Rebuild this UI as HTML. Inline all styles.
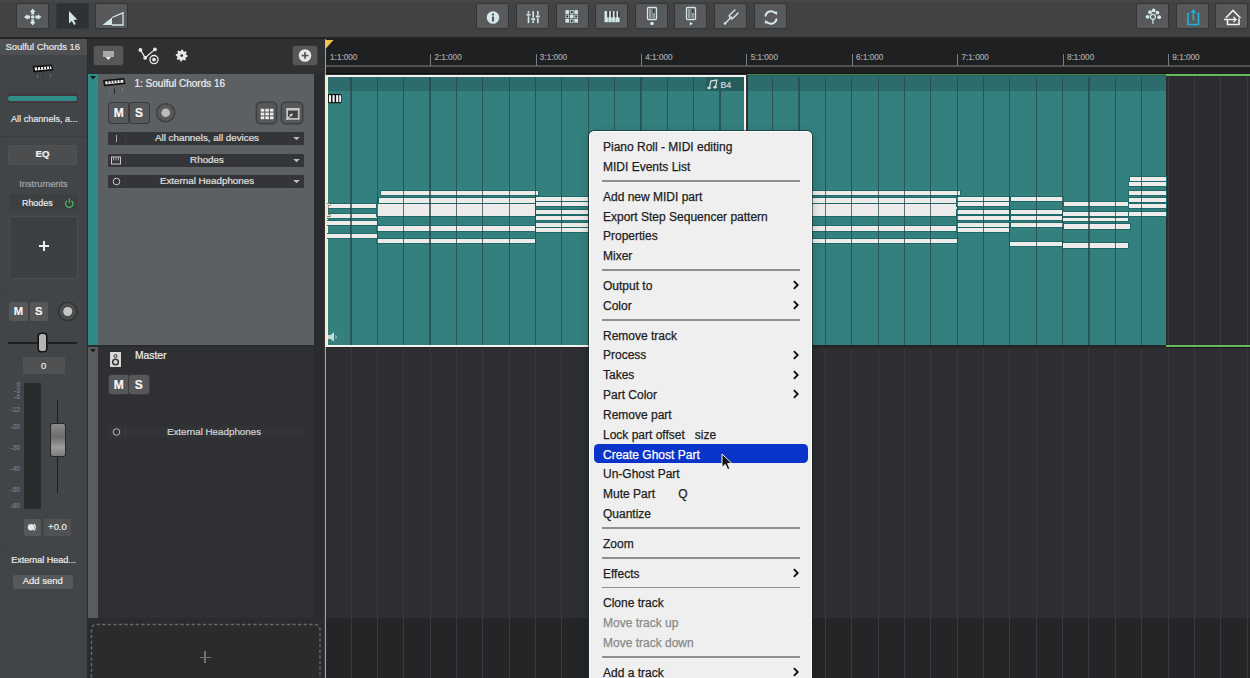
<!DOCTYPE html>
<html><head><meta charset="utf-8">
<style>
*{box-sizing:border-box;margin:0;padding:0}
html,body{width:1250px;height:678px;overflow:hidden;background:#3a3b3d;font-family:"Liberation Sans",sans-serif;position:relative}
.a{position:absolute}
.t{position:absolute;white-space:nowrap;line-height:1;-webkit-text-stroke-width:0.2px}
svg.a{overflow:visible}
</style></head><body>
<div class="a" style="left:0px;top:0px;width:1250px;height:37px;background:linear-gradient(180deg,#48494b 0px,#424345 2.5px,#404143 100%);"></div>
<div class="a" style="left:0px;top:37px;width:1250px;height:2px;background:#232426;"></div>
<div class="a" style="left:17px;top:4px;width:31px;height:24px;background:#58595b;border-radius:1.5px;box-shadow:0 0 0 1px #353638,0 1px 1px #2a2b2d"></div>
<div class="a" style="left:57px;top:4px;width:31px;height:24px;background:#2f3234;border-radius:1.5px;box-shadow:0 0 0 1px #353638,0 1px 1px #2a2b2d"></div>
<div class="a" style="left:96px;top:4px;width:31px;height:24px;background:#58595b;border-radius:1.5px;box-shadow:0 0 0 1px #353638,0 1px 1px #2a2b2d"></div>
<div class="a" style="left:477px;top:4px;width:31px;height:24px;background:#58595b;border-radius:1.5px;box-shadow:0 0 0 1px #353638,0 1px 1px #2a2b2d"></div>
<div class="a" style="left:517px;top:4px;width:31px;height:24px;background:#58595b;border-radius:1.5px;box-shadow:0 0 0 1px #353638,0 1px 1px #2a2b2d"></div>
<div class="a" style="left:557px;top:4px;width:31px;height:24px;background:#58595b;border-radius:1.5px;box-shadow:0 0 0 1px #353638,0 1px 1px #2a2b2d"></div>
<div class="a" style="left:596px;top:4px;width:31px;height:24px;background:#58595b;border-radius:1.5px;box-shadow:0 0 0 1px #353638,0 1px 1px #2a2b2d"></div>
<div class="a" style="left:636px;top:4px;width:31px;height:24px;background:#58595b;border-radius:1.5px;box-shadow:0 0 0 1px #353638,0 1px 1px #2a2b2d"></div>
<div class="a" style="left:675px;top:4px;width:31px;height:24px;background:#58595b;border-radius:1.5px;box-shadow:0 0 0 1px #353638,0 1px 1px #2a2b2d"></div>
<div class="a" style="left:715px;top:4px;width:31px;height:24px;background:#58595b;border-radius:1.5px;box-shadow:0 0 0 1px #353638,0 1px 1px #2a2b2d"></div>
<div class="a" style="left:755px;top:4px;width:31px;height:24px;background:#58595b;border-radius:1.5px;box-shadow:0 0 0 1px #353638,0 1px 1px #2a2b2d"></div>
<div class="a" style="left:1137px;top:4px;width:31px;height:24px;background:#58595b;border-radius:1.5px;box-shadow:0 0 0 1px #353638,0 1px 1px #2a2b2d"></div>
<div class="a" style="left:1177px;top:4px;width:31px;height:24px;background:#58595b;border-radius:1.5px;box-shadow:0 0 0 1px #353638,0 1px 1px #2a2b2d"></div>
<div class="a" style="left:1216px;top:4px;width:31px;height:24px;background:#58595b;border-radius:1.5px;box-shadow:0 0 0 1px #353638,0 1px 1px #2a2b2d"></div>
<svg class="a" style="left:17px;top:4px;" width="31" height="24" viewBox="0 0 31 24"><g fill="#d3e6ea"><path d="M15.7 4.5 L18.5 8 L12.9 8 Z"/><path d="M15.7 21.5 L18.5 18 L12.9 18 Z"/><path d="M7 13 L10.5 10.3 L10.5 15.7 Z"/><path d="M24.4 13 L20.9 10.3 L20.9 15.7 Z"/><rect x="14.2" y="7.5" width="3" height="3"/><rect x="14.2" y="15.5" width="3" height="3"/><rect x="10" y="11.5" width="3" height="3"/><rect x="18.4" y="11.5" width="3" height="3"/><circle cx="15.7" cy="13" r="1.8"/></g></svg>
<svg class="a" style="left:57px;top:4px;" width="31" height="24" viewBox="0 0 31 24"><path d="M12 7 L12 19.5 L14.8 17 L17 21 L18.8 20 L16.7 16 L20.3 15.6 Z" fill="#d3e6ea"/></svg>
<svg class="a" style="left:96px;top:4px;" width="31" height="24" viewBox="0 0 31 24"><path d="M6.5 21 L16 13.5 L16 21 Z" fill="#d3e6ea"/><path d="M16 13.5 L27 8.8 L27 21 L16 21" fill="none" stroke="#d3e6ea" stroke-width="1.3"/></svg>
<svg class="a" style="left:477px;top:4px;" width="31" height="24" viewBox="0 0 31 24"><circle cx="16" cy="13.5" r="6.3" fill="#d3e6ea"/><rect x="15" y="9.5" width="2" height="2" fill="#555"/><rect x="15" y="12.5" width="2" height="5" fill="#555"/></svg>
<svg class="a" style="left:517px;top:4px;" width="31" height="24" viewBox="0 0 31 24"><rect x="10.7" y="7.1" width="1.6" height="12" fill="#d3e6ea"/><rect x="9.2" y="9.1" width="4.6" height="3.2" fill="#58595b"/><rect x="9.6" y="9.7" width="3.8" height="2" fill="#d3e6ea"/><rect x="15.399999999999999" y="7.1" width="1.6" height="12" fill="#d3e6ea"/><rect x="13.899999999999999" y="13.700000000000001" width="4.6" height="3.2" fill="#58595b"/><rect x="14.299999999999999" y="14.3" width="3.8" height="2" fill="#d3e6ea"/><rect x="20.0" y="7.1" width="1.6" height="12" fill="#d3e6ea"/><rect x="18.5" y="10.8" width="4.6" height="3.2" fill="#58595b"/><rect x="18.900000000000002" y="11.4" width="3.8" height="2" fill="#d3e6ea"/></svg>
<svg class="a" style="left:557px;top:4px;" width="31" height="24" viewBox="0 0 31 24"><rect x="8.4" y="6.2" width="3.6" height="3.6" fill="#d3e6ea"/><rect x="8.75" y="10.950000000000001" width="2.9" height="2.9" fill="none" stroke="#d3e6ea" stroke-width="0.7"/><circle cx="10.200000000000001" cy="12.400000000000002" r="0.7" fill="#222"/><rect x="8.4" y="15.0" width="3.6" height="3.6" fill="#d3e6ea"/><rect x="13.25" y="6.55" width="2.9" height="2.9" fill="none" stroke="#d3e6ea" stroke-width="0.7"/><circle cx="14.700000000000001" cy="8.0" r="0.7" fill="#222"/><rect x="12.9" y="10.600000000000001" width="3.6" height="3.6" fill="#d3e6ea"/><rect x="13.25" y="15.35" width="2.9" height="2.9" fill="none" stroke="#d3e6ea" stroke-width="0.7"/><circle cx="14.700000000000001" cy="16.8" r="0.7" fill="#222"/><rect x="17.4" y="6.2" width="3.6" height="3.6" fill="#d3e6ea"/><rect x="17.75" y="10.950000000000001" width="2.9" height="2.9" fill="none" stroke="#d3e6ea" stroke-width="0.7"/><circle cx="19.2" cy="12.400000000000002" r="0.7" fill="#222"/><rect x="17.4" y="15.0" width="3.6" height="3.6" fill="#d3e6ea"/></svg>
<svg class="a" style="left:596px;top:4px;" width="31" height="24" viewBox="0 0 31 24"><rect x="8.5" y="7.1" width="15" height="11.1" fill="#d3e6ea"/><rect x="11.899999999999999" y="7.1" width="0.6" height="11.1" fill="#7f8c8e"/><rect x="15.6" y="7.1" width="0.6" height="11.1" fill="#7f8c8e"/><rect x="19.3" y="7.1" width="0.6" height="11.1" fill="#7f8c8e"/><rect x="11.2" y="7.1" width="1.9" height="6.2" fill="#3a3b3c"/><rect x="14.9" y="7.1" width="1.9" height="6.2" fill="#3a3b3c"/><rect x="18.6" y="7.1" width="1.9" height="6.2" fill="#3a3b3c"/><rect x="22.0" y="7.1" width="1.9" height="6.2" fill="#3a3b3c"/></svg>
<svg class="a" style="left:636px;top:4px;" width="31" height="24" viewBox="0 0 31 24"><rect x="11.5" y="3.5" width="9" height="12" rx="1" fill="none" stroke="#d3e6ea" stroke-width="1.3"/><rect x="13" y="5" width="2.5" height="9" fill="#8fa0a3"/><rect x="16.5" y="5" width="2.5" height="9" fill="#8fa0a3"/><rect x="17" y="5" width="1.6" height="4" fill="#333"/><circle cx="16" cy="19.5" r="1.8" fill="#d3e6ea"/></svg>
<svg class="a" style="left:675px;top:4px;" width="31" height="24" viewBox="0 0 31 24"><rect x="11.5" y="3.5" width="9" height="12" rx="1" fill="none" stroke="#d3e6ea" stroke-width="1.3"/><rect x="13" y="5" width="2.5" height="9" fill="#8fa0a3"/><rect x="16.5" y="5" width="2.5" height="9" fill="#8fa0a3"/><rect x="17" y="5" width="1.6" height="4" fill="#333"/><path d="M14.8 17.8 L18 19.7 L14.8 21.6 Z" fill="#d3e6ea"/></svg>
<svg class="a" style="left:715px;top:4px;" width="31" height="24" viewBox="0 0 31 24"><path d="M10 19.5 L16.5 13" stroke="#d3e6ea" stroke-width="1.5" stroke-linecap="round" fill="none"/><path d="M14 12 L17 15 M14 12 Q17.5 8 20 6 M17 15 Q21 11.5 23 9" stroke="#d3e6ea" stroke-width="1.4" fill="none" stroke-linecap="round"/><circle cx="10" cy="19.5" r="1.3" fill="#d3e6ea"/></svg>
<svg class="a" style="left:755px;top:4px;" width="31" height="24" viewBox="0 0 31 24"><path d="M10.5 12.5 A5.6 5.6 0 0 1 20.5 9.5" stroke="#d3e6ea" stroke-width="2" fill="none"/><path d="M21.5 14.5 A5.6 5.6 0 0 1 11.5 17.5" stroke="#d3e6ea" stroke-width="2" fill="none"/><path d="M19 7.5 L22.5 7.8 L21.5 11.3 Z" fill="#d3e6ea"/><path d="M13 19.5 L9.5 19.2 L10.5 15.7 Z" fill="#d3e6ea"/></svg>
<svg class="a" style="left:1137px;top:4px;" width="31" height="24" viewBox="0 0 31 24"><g fill="#d3e6ea"><circle cx="10.6" cy="12.8" r="1.9"/><circle cx="13" cy="8.2" r="1.9"/><circle cx="16.6" cy="6.4" r="1.9"/><circle cx="20.4" cy="8.6" r="1.9"/><circle cx="22.2" cy="13.2" r="1.9"/></g><circle cx="15.9" cy="12.8" r="2.5" fill="none" stroke="#d3e6ea" stroke-width="1.2"/><rect x="15.3" y="15.2" width="1.2" height="4.6" fill="#d3e6ea"/></svg>
<svg class="a" style="left:1177px;top:4px;" width="31" height="24" viewBox="0 0 31 24"><path d="M12.2 9.5 L11 9.5 L11 20.5 L21.5 20.5 L21.5 9.5 L20.3 9.5" stroke="#1fb3d9" stroke-width="1.6" fill="none"/><rect x="15.6" y="7.5" width="1.5" height="9" fill="#1fb3d9"/><path d="M13.4 8.8 L16.35 5 L19.3 8.8 Z" fill="#1fb3d9"/></svg>
<svg class="a" style="left:1216px;top:4px;" width="31" height="24" viewBox="0 0 31 24"><path d="M9.8 14 L17 6.5 L24.5 14 M11.5 16 L11.5 20.5 L23 20.5 L23 14.5" stroke="#f0f0f0" stroke-width="1.6" fill="none"/><path d="M8 15.5 L19 15.5" stroke="#f0f0f0" stroke-width="1.4"/><path d="M17.5 13 L20 15.5 L17.5 18" stroke="#f0f0f0" stroke-width="1.4" fill="none"/></svg>
<div class="a" style="left:0px;top:39px;width:87px;height:639px;background:#424548;"></div>
<div class="a" style="left:5px;top:55px;width:1px;height:623px;background:#3d4043;"></div>
<div class="a" style="left:81.5px;top:55px;width:1px;height:623px;background:#3d4043;"></div>
<div class="a" style="left:87px;top:39px;width:1px;height:639px;background:#2b2c2e;"></div>
<div class="a" style="left:0px;top:39px;width:87px;height:16px;background:#4e5052;"></div>
<div class="t" style="left:5.5px;top:42px;font-size:9.4px;color:#e8e8e8;">Soulful Chords 16</div>
<svg class="a" style="left:30px;top:62px;" width="26" height="22" viewBox="0 0 26 22"><path d="M2.5 4 L22 2.5 L23.5 8.5 L3.5 10.5 Z" fill="#111"/><path d="M4.5 5.5 L21 4.2 L21.7 7 L5 8.5 Z" fill="#eee"/><g fill="#111"><rect x="7" y="5" width="1" height="2.6"/><rect x="10" y="4.8" width="1" height="2.6"/><rect x="13" y="4.6" width="1" height="2.6"/><rect x="16" y="4.4" width="1" height="2.6"/><rect x="19" y="4.2" width="1" height="2.6"/></g><rect x="7" y="13" width="0.8" height="3" fill="#777"/><rect x="13" y="12.5" width="1" height="5" fill="#333"/><rect x="20" y="12" width="0.8" height="3" fill="#777"/></svg>
<div class="a" style="left:8px;top:93px;width:69.5px;height:10px;background:#41393c;border-radius:1px"></div>
<div class="a" style="left:8.2px;top:95.5px;width:69px;height:5.8px;background:#2f8d89;border-radius:2px"></div>
<div class="t" style="left:11px;top:114.5px;font-size:9.1px;color:#e6e6e6;">All channels, a...</div>
<div class="a" style="left:0px;top:135.5px;width:87px;height:1px;background:#3b3e41;"></div>
<div class="a" style="left:8px;top:145px;width:69px;height:20px;background:#4b4d4f;border-radius:2px;box-shadow:inset 0 0 0 1px #505254"></div>
<div class="t" style="left:8px;top:148.6px;font-size:9.6px;color:#f2f2f2;width:69px;text-align:center;font-weight:bold">EQ</div>
<div class="t" style="left:0px;top:180px;font-size:9.3px;color:#a4a6a8;width:87px;text-align:center">Instruments</div>
<div class="a" style="left:9px;top:194px;width:69px;height:17px;background:#3d3f41;border-radius:2px"></div>
<div class="t" style="left:22px;top:199px;font-size:8.9px;color:#ececec;">Rhodes</div>
<svg class="a" style="left:62px;top:196px;" width="14" height="14" viewBox="0 0 14 14"><path d="M5.3 4.6 A3.7 3.7 0 1 0 9.3 4.6" stroke="#4cc95a" stroke-width="1.1" fill="none"/><rect x="6.75" y="2.3" width="1.1" height="4.6" fill="#4cc95a"/></svg>
<div class="a" style="left:9px;top:215.5px;width:69px;height:63px;background:#3d4043;border-radius:2px;box-shadow:inset 0 0 0 1px #4a4d50"></div>
<div class="a" style="left:38.5px;top:245px;width:10px;height:2px;background:#eeeeee;"></div>
<div class="a" style="left:42.5px;top:241px;width:2px;height:10px;background:#eeeeee;"></div>
<div class="a" style="left:0px;top:292px;width:87px;height:1px;background:#3e4042;"></div>
<div class="a" style="left:9px;top:302px;width:19px;height:19px;background:#555759;border-radius:2px"></div>
<div class="a" style="left:29.5px;top:302px;width:18.5px;height:19px;background:#555759;border-radius:2px"></div>
<div class="t" style="left:9px;top:306.2px;font-size:11.2px;color:#f4f4f4;width:19px;text-align:center;font-weight:bold">M</div>
<div class="t" style="left:29.5px;top:306.2px;font-size:11.2px;color:#f4f4f4;width:18.5px;text-align:center;font-weight:bold">S</div>
<svg class="a" style="left:56px;top:300px;" width="24" height="24" viewBox="0 0 24 24"><circle cx="11.7" cy="11.5" r="9.2" fill="#4a4c4e" stroke="#323335" stroke-width="1.6"/><circle cx="11.7" cy="11.5" r="4.5" fill="#c6c6c6"/></svg>
<div class="a" style="left:8px;top:342px;width:69px;height:1.6px;background:#1f2022;"></div>
<div class="a" style="left:38.9px;top:333.7px;width:7.6px;height:17.7px;background:#b4b4b4;border-radius:2.5px;box-shadow:0 0 0 1.6px #151515"></div>
<div class="a" style="left:22.5px;top:357px;width:42.5px;height:17px;background:#4f5153;border-radius:1px"></div>
<div class="t" style="left:22.5px;top:361px;font-size:9.5px;color:#eeeeee;width:42.5px;text-align:center">0</div>
<div class="a" style="left:24px;top:383px;width:17px;height:126px;background:#2a2b2d;"></div>
<div class="t" style="left:0px;top:382px;font-size:6.5px;color:#7b7d80;width:20px;text-align:right">0</div>
<div class="t" style="left:0px;top:388px;font-size:6.5px;color:#7b7d80;width:20px;text-align:right">-3</div>
<div class="t" style="left:0px;top:394.3px;font-size:6.5px;color:#7b7d80;width:20px;text-align:right">-6</div>
<div class="t" style="left:0px;top:407px;font-size:6.5px;color:#7b7d80;width:20px;text-align:right">-12</div>
<div class="t" style="left:0px;top:424.4px;font-size:6.5px;color:#7b7d80;width:20px;text-align:right">-20</div>
<div class="t" style="left:0px;top:444.9px;font-size:6.5px;color:#7b7d80;width:20px;text-align:right">-30</div>
<div class="t" style="left:0px;top:466px;font-size:6.5px;color:#7b7d80;width:20px;text-align:right">-40</div>
<div class="t" style="left:0px;top:487.3px;font-size:6.5px;color:#7b7d80;width:20px;text-align:right">-50</div>
<div class="t" style="left:0px;top:502.5px;font-size:6.5px;color:#7b7d80;width:20px;text-align:right">-60</div>
<div class="a" style="left:56.6px;top:400px;width:1.8px;height:93px;background:#1c1d1f;"></div>
<div class="a" style="left:50.8px;top:423.5px;width:14.5px;height:32px;background:linear-gradient(180deg,#8c8c8c 0%,#6c6c6c 40%,#9c9c9c 72%,#7c7c7c 100%);border-radius:2px;box-shadow:0 0 0 1px #262626"></div>
<div class="a" style="left:24px;top:519px;width:16.5px;height:16.5px;background:#555759;border-radius:2px"></div>
<svg class="a" style="left:24px;top:519px;" width="17" height="17" viewBox="0 0 17 17"><circle cx="7" cy="8.3" r="3.2" fill="#e6e6e6"/><path d="M10 5 Q12.5 8.3 10 11.6" stroke="#e6e6e6" stroke-width="1.3" fill="none"/></svg>
<div class="a" style="left:44px;top:519px;width:27px;height:16.5px;background:#4f5153;border-radius:1px"></div>
<div class="t" style="left:44px;top:522px;font-size:9.5px;color:#eeeeee;width:27px;text-align:center">+0.0</div>
<div class="a" style="left:0px;top:544.5px;width:87px;height:1px;background:#3e4042;"></div>
<div class="t" style="left:0px;top:556.3px;font-size:9.0px;color:#ececec;width:87px;text-align:center">External Head...</div>
<div class="a" style="left:12.5px;top:575px;width:60.5px;height:14px;background:#56585a;border-radius:2px"></div>
<div class="t" style="left:12.5px;top:576.4px;font-size:9.5px;color:#ececec;width:60.5px;text-align:center">Add send</div>
<div class="a" style="left:88px;top:39px;width:237px;height:35px;background:#2f3032;"></div>
<div class="a" style="left:88px;top:74px;width:237px;height:604px;background:#2a2b2d;"></div>
<div class="a" style="left:94px;top:45.7px;width:28.5px;height:19px;background:#555759;border-radius:2px;box-shadow:0 0 0 1px #39393b"></div>
<div class="a" style="left:102.5px;top:51px;width:11.3px;height:6px;background:#a8a9aa;"></div>
<svg class="a" style="left:94px;top:45px;" width="29" height="20" viewBox="0 0 29 20"><path d="M11.5 12 L17 12 L14.25 15 Z" fill="#f0f0f0"/></svg>
<svg class="a" style="left:136px;top:44px;" width="24" height="22" viewBox="0 0 24 22"><path d="M4.4 5.9 L9.2 13.8 L18.9 5.4" stroke="#e8e8e8" stroke-width="1.2" fill="none"/><circle cx="4.4" cy="5.9" r="1.9" fill="#e8e8e8"/><circle cx="9.2" cy="13.8" r="1.9" fill="#e8e8e8"/><circle cx="18.9" cy="5.4" r="1.9" fill="#e8e8e8"/><circle cx="18" cy="15.6" r="4.1" fill="#2f3032" stroke="#e8e8e8" stroke-width="1.3"/><circle cx="18" cy="15.6" r="1.9" fill="#e8e8e8"/></svg>
<svg class="a" style="left:174px;top:48px;" width="16" height="16" viewBox="0 0 16 16"><polygon points="13.70,7.60 13.58,8.77 11.95,9.36 11.52,10.16 11.94,11.84 11.03,12.59 9.46,11.85 8.60,12.11 7.70,13.60 6.53,13.48 5.94,11.85 5.14,11.42 3.46,11.84 2.71,10.93 3.45,9.36 3.19,8.50 1.70,7.60 1.82,6.43 3.45,5.84 3.88,5.04 3.46,3.36 4.37,2.61 5.94,3.35 6.80,3.09 7.70,1.60 8.87,1.72 9.46,3.35 10.26,3.78 11.94,3.36 12.69,4.27 11.95,5.84 12.21,6.70" fill="#e6e8ea"/><circle cx="7.7" cy="7.6" r="1.4" fill="#2f3032"/></svg>
<div class="a" style="left:293px;top:46px;width:24px;height:19px;background:#555759;border-radius:2px;box-shadow:0 0 0 1px #39393b"></div>
<svg class="a" style="left:293px;top:46px;" width="24" height="19" viewBox="0 0 24 19"><circle cx="12" cy="9.5" r="6.3" fill="#e8e8e8"/><rect x="8.6" y="8.7" width="6.8" height="1.7" fill="#555759"/><rect x="11.15" y="6.1" width="1.7" height="6.8" fill="#555759"/></svg>
<div class="a" style="left:88px;top:74px;width:10px;height:271px;background:#2e8b88;"></div>
<svg class="a" style="left:89px;top:75px;" width="8" height="6" viewBox="0 0 8 6"><path d="M1 1 L7 1 L4 4.5 Z" fill="#1c1d1f"/></svg>
<div class="a" style="left:98px;top:74px;width:215.5px;height:271px;background:#5d6063;"></div>
<svg class="a" style="left:101px;top:76px;" width="28" height="22" viewBox="0 0 28 22"><path d="M2 4 L23 2 L24.5 8 L3 10.5 Z" fill="#111"/><path d="M4 5.5 L22 3.8 L22.7 6.6 L4.5 8.5 Z" fill="#eee"/><g fill="#111"><rect x="6.5" y="5" width="1" height="2.6"/><rect x="9.5" y="4.7" width="1" height="2.6"/><rect x="12.5" y="4.4" width="1" height="2.6"/><rect x="15.5" y="4.1" width="1" height="2.6"/><rect x="18.5" y="3.8" width="1" height="2.6"/></g><rect x="8" y="13" width="0.8" height="3.5" fill="#777"/><rect x="13" y="12.5" width="1" height="5" fill="#222"/><rect x="21" y="12" width="0.8" height="3" fill="#888"/></svg>
<div class="t" style="left:134.5px;top:78.6px;font-size:10px;color:#f0f0f0;">1: Soulful Chords 16</div>
<div class="a" style="left:108.5px;top:103px;width:20.5px;height:19.5px;background:#555759;border-radius:3px;box-shadow:0 0 0 1px #3a3b3d"></div>
<div class="a" style="left:129px;top:103px;width:20px;height:19.5px;background:#555759;border-radius:3px;box-shadow:0 0 0 1px #3a3b3d"></div>
<div class="a" style="left:128.5px;top:103px;width:1px;height:19.5px;background:#3a3b3d;"></div>
<div class="t" style="left:108.5px;top:106.8px;font-size:12px;color:#f5f5f5;width:20.5px;text-align:center;font-weight:bold">M</div>
<div class="t" style="left:129px;top:106.8px;font-size:12px;color:#f5f5f5;width:20px;text-align:center;font-weight:bold">S</div>
<svg class="a" style="left:154px;top:101px;" width="24" height="24" viewBox="0 0 24 24"><circle cx="11.7" cy="11.7" r="9" fill="#58595b" stroke="#3f4042" stroke-width="1.6"/><circle cx="11.7" cy="11.7" r="4.3" fill="#bdbdbd"/></svg>
<div class="a" style="left:256.5px;top:102.5px;width:19.5px;height:20px;background:#555759;border-radius:3.5px;box-shadow:0 0 0 1.4px #3d3e40"></div>
<svg class="a" style="left:256.5px;top:102.5px;" width="20" height="20" viewBox="0 0 20 20"><rect x="3.7" y="5.8" width="3.6" height="2.8" fill="#ececec"/><rect x="3.7" y="9.6" width="3.6" height="2.8" fill="#ececec"/><rect x="3.7" y="13.399999999999999" width="3.6" height="2.8" fill="#ececec"/><rect x="8.3" y="5.8" width="3.6" height="2.8" fill="#ececec"/><rect x="8.3" y="9.6" width="3.6" height="2.8" fill="#ececec"/><rect x="8.3" y="13.399999999999999" width="3.6" height="2.8" fill="#ececec"/><rect x="12.899999999999999" y="5.8" width="3.6" height="2.8" fill="#ececec"/><rect x="12.899999999999999" y="9.6" width="3.6" height="2.8" fill="#ececec"/><rect x="12.899999999999999" y="13.399999999999999" width="3.6" height="2.8" fill="#ececec"/></svg>
<div class="a" style="left:282.2px;top:102.5px;width:20px;height:20px;background:#555759;border-radius:3.5px;box-shadow:0 0 0 1.4px #3d3e40"></div>
<svg class="a" style="left:282px;top:102.5px;" width="21" height="20" viewBox="0 0 21 20"><rect x="5.2" y="5.9" width="11.5" height="10" fill="#3f4042" stroke="#c6c6c6" stroke-width="1.7"/><rect x="4.4" y="5.1" width="13.1" height="2.4" fill="#c6c6c6"/><path d="M4.3 16.8 L9.6 11.6" stroke="#d8d8d8" stroke-width="1.1"/><path d="M10.8 10.4 L7.6 11.2 L10 13.6 Z" fill="#d8d8d8"/></svg>
<div class="a" style="left:108px;top:132px;width:195.5px;height:13px;background:#343538;border-radius:1px"></div>
<div class="a" style="left:124.5px;top:133px;width:1px;height:11px;background:#3c3d40;"></div>
<div class="a" style="left:289px;top:133px;width:1px;height:11px;background:#3c3d40;"></div>
<div class="t" style="left:125px;top:132.9px;font-size:9.8px;color:#e0e0e0;width:164px;text-align:center">All channels, all devices</div>
<svg class="a" style="left:290px;top:132px;" width="13" height="13" viewBox="0 0 13 13"><path d="M3.2 5 L9.8 5 L6.5 8.3 Z" fill="#bdbdbd"/></svg>
<div class="a" style="left:116px;top:135px;width:1px;height:7px;background:#aaaaaa;"></div>
<div class="a" style="left:108px;top:153.6px;width:195.5px;height:13px;background:#343538;border-radius:1px"></div>
<div class="a" style="left:124.5px;top:154.6px;width:1px;height:11px;background:#3c3d40;"></div>
<div class="a" style="left:289px;top:154.6px;width:1px;height:11px;background:#3c3d40;"></div>
<div class="t" style="left:125px;top:154.5px;font-size:9.8px;color:#e0e0e0;width:164px;text-align:center">Rhodes</div>
<svg class="a" style="left:290px;top:153.6px;" width="13" height="13" viewBox="0 0 13 13"><path d="M3.2 5 L9.8 5 L6.5 8.3 Z" fill="#bdbdbd"/></svg>
<svg class="a" style="left:108px;top:153.6px;" width="17" height="13" viewBox="0 0 17 13"><rect x="3.5" y="3" width="9" height="7" fill="none" stroke="#c8c8c8" stroke-width="1"/><g fill="#c8c8c8"><rect x="5.3" y="3" width="0.8" height="3.5"/><rect x="7.7" y="3" width="0.8" height="3.5"/><rect x="10.1" y="3" width="0.8" height="3.5"/></g></svg>
<div class="a" style="left:108px;top:175.3px;width:195.5px;height:13px;background:#343538;border-radius:1px"></div>
<div class="a" style="left:124.5px;top:176.3px;width:1px;height:11px;background:#3c3d40;"></div>
<div class="a" style="left:289px;top:176.3px;width:1px;height:11px;background:#3c3d40;"></div>
<div class="t" style="left:125px;top:176.20000000000002px;font-size:9.8px;color:#e0e0e0;width:164px;text-align:center">External Headphones</div>
<svg class="a" style="left:290px;top:175.3px;" width="13" height="13" viewBox="0 0 13 13"><path d="M3.2 5 L9.8 5 L6.5 8.3 Z" fill="#bdbdbd"/></svg>
<svg class="a" style="left:108px;top:175.3px;" width="17" height="13" viewBox="0 0 17 13"><circle cx="8.5" cy="6.5" r="3.3" fill="none" stroke="#c8c8c8" stroke-width="1"/></svg>
<div class="a" style="left:88px;top:345px;width:225.5px;height:1.5px;background:#2a2b2d;"></div>
<div class="a" style="left:88px;top:346.5px;width:10px;height:271px;background:#5b5c5d;"></div>
<svg class="a" style="left:89px;top:348px;" width="8" height="6" viewBox="0 0 8 6"><path d="M1 1 L7 1 L4 4.5 Z" fill="#1c1d1f"/></svg>
<div class="a" style="left:98px;top:346.5px;width:215.5px;height:271px;background:#2f3033;"></div>
<svg class="a" style="left:108px;top:350px;" width="16" height="20" viewBox="0 0 16 20"><rect x="2" y="2" width="11" height="15" fill="#d8d8d8" rx="0.5"/><circle cx="7.5" cy="6" r="1.5" fill="none" stroke="#333" stroke-width="1"/><circle cx="7.5" cy="12" r="2.8" fill="none" stroke="#333" stroke-width="1.5"/></svg>
<div class="t" style="left:135px;top:351.2px;font-size:10.3px;color:#f0f0f0;">Master</div>
<div class="a" style="left:109px;top:375px;width:19.5px;height:19px;background:#555759;border-radius:3px;box-shadow:0 0 0 1px #3a3b3d"></div>
<div class="a" style="left:129px;top:375px;width:19.5px;height:19px;background:#555759;border-radius:3px;box-shadow:0 0 0 1px #3a3b3d"></div>
<div class="t" style="left:109px;top:378.5px;font-size:12px;color:#f5f5f5;width:19.5px;text-align:center;font-weight:bold">M</div>
<div class="t" style="left:129px;top:378.5px;font-size:12px;color:#f5f5f5;width:19.5px;text-align:center;font-weight:bold">S</div>
<div class="a" style="left:108px;top:426px;width:195px;height:12px;background:#323336;border-radius:1px"></div>
<div class="a" style="left:124.5px;top:427px;width:1px;height:10px;background:#3a3b3e;"></div>
<div class="t" style="left:125px;top:426.6px;font-size:9.8px;color:#d5d6d7;width:178px;text-align:center">External Headphones</div>
<svg class="a" style="left:108px;top:426px;" width="17" height="12" viewBox="0 0 17 12"><circle cx="8.5" cy="6" r="3.3" fill="none" stroke="#b8b8b8" stroke-width="1"/></svg>
<div class="a" style="left:88px;top:617.5px;width:237px;height:61px;background:#2a2b2d;"></div>
<svg class="a" style="left:90px;top:623px;" width="232" height="60" viewBox="0 0 232 60"><rect x="1.5" y="1.5" width="228.5" height="70" rx="5" fill="none" stroke="#68696b" stroke-width="1.4" stroke-dasharray="3.2 2.4"/></svg>
<div class="a" style="left:199.5px;top:656.5px;width:11px;height:1.2px;background:#707173;"></div>
<div class="a" style="left:204.4px;top:651px;width:1.2px;height:11.5px;background:#707173;"></div>
<div class="a" style="left:325px;top:39px;width:925px;height:35px;background:#1f2022;"></div>
<div class="a" style="left:325px;top:64.9px;width:925px;height:1.7px;background:#505153;"></div>
<div class="t" style="left:330.06px;top:53.6px;font-size:8.2px;color:#a4a5a7;">1:1:000</div>
<div class="a" style="left:430.18px;top:54px;width:1px;height:11.5px;background:#7c7d7f;"></div>
<div class="t" style="left:434.38px;top:53.6px;font-size:8.2px;color:#a4a5a7;">2:1:000</div>
<div class="a" style="left:535.6px;top:54px;width:1px;height:11.5px;background:#7c7d7f;"></div>
<div class="t" style="left:539.8000000000001px;top:53.6px;font-size:8.2px;color:#a4a5a7;">3:1:000</div>
<div class="a" style="left:641.02px;top:54px;width:1px;height:11.5px;background:#7c7d7f;"></div>
<div class="t" style="left:645.22px;top:53.6px;font-size:8.2px;color:#a4a5a7;">4:1:000</div>
<div class="a" style="left:746.44px;top:54px;width:1px;height:11.5px;background:#7c7d7f;"></div>
<div class="t" style="left:750.6400000000001px;top:53.6px;font-size:8.2px;color:#a4a5a7;">5:1:000</div>
<div class="a" style="left:851.86px;top:54px;width:1px;height:11.5px;background:#7c7d7f;"></div>
<div class="t" style="left:856.0600000000001px;top:53.6px;font-size:8.2px;color:#a4a5a7;">6:1:000</div>
<div class="a" style="left:957.28px;top:54px;width:1px;height:11.5px;background:#7c7d7f;"></div>
<div class="t" style="left:961.48px;top:53.6px;font-size:8.2px;color:#a4a5a7;">7:1:000</div>
<div class="a" style="left:1062.7px;top:54px;width:1px;height:11.5px;background:#7c7d7f;"></div>
<div class="t" style="left:1066.9px;top:53.6px;font-size:8.2px;color:#a4a5a7;">8:1:000</div>
<div class="a" style="left:1168.12px;top:54px;width:1px;height:11.5px;background:#7c7d7f;"></div>
<div class="t" style="left:1172.32px;top:53.6px;font-size:8.2px;color:#a4a5a7;">9:1:000</div>
<div class="a" style="left:325px;top:74px;width:925px;height:272px;background:#2a2c2f;"></div>
<div class="a" style="left:325px;top:346px;width:925px;height:271.5px;background:#2c2e31;"></div>
<div class="a" style="left:325px;top:617.5px;width:925px;height:61px;background:#232527;"></div>
<div class="a" style="left:324.16px;top:74px;width:1px;height:604px;background:#37393c;"></div>
<div class="a" style="left:350.51px;top:74px;width:1px;height:604px;background:#37393c;"></div>
<div class="a" style="left:376.87px;top:74px;width:1px;height:604px;background:#37393c;"></div>
<div class="a" style="left:403.22px;top:74px;width:1px;height:604px;background:#37393c;"></div>
<div class="a" style="left:429.58px;top:74px;width:1px;height:604px;background:#37393c;"></div>
<div class="a" style="left:455.93px;top:74px;width:1px;height:604px;background:#37393c;"></div>
<div class="a" style="left:482.29px;top:74px;width:1px;height:604px;background:#37393c;"></div>
<div class="a" style="left:508.64px;top:74px;width:1px;height:604px;background:#37393c;"></div>
<div class="a" style="left:535.0px;top:74px;width:1px;height:604px;background:#37393c;"></div>
<div class="a" style="left:561.35px;top:74px;width:1px;height:604px;background:#37393c;"></div>
<div class="a" style="left:587.71px;top:74px;width:1px;height:604px;background:#37393c;"></div>
<div class="a" style="left:614.06px;top:74px;width:1px;height:604px;background:#37393c;"></div>
<div class="a" style="left:640.42px;top:74px;width:1px;height:604px;background:#37393c;"></div>
<div class="a" style="left:666.77px;top:74px;width:1px;height:604px;background:#37393c;"></div>
<div class="a" style="left:693.13px;top:74px;width:1px;height:604px;background:#37393c;"></div>
<div class="a" style="left:719.49px;top:74px;width:1px;height:604px;background:#37393c;"></div>
<div class="a" style="left:745.84px;top:74px;width:1px;height:604px;background:#37393c;"></div>
<div class="a" style="left:772.2px;top:74px;width:1px;height:604px;background:#37393c;"></div>
<div class="a" style="left:798.55px;top:74px;width:1px;height:604px;background:#37393c;"></div>
<div class="a" style="left:824.9px;top:74px;width:1px;height:604px;background:#37393c;"></div>
<div class="a" style="left:851.26px;top:74px;width:1px;height:604px;background:#37393c;"></div>
<div class="a" style="left:877.62px;top:74px;width:1px;height:604px;background:#37393c;"></div>
<div class="a" style="left:903.97px;top:74px;width:1px;height:604px;background:#37393c;"></div>
<div class="a" style="left:930.32px;top:74px;width:1px;height:604px;background:#37393c;"></div>
<div class="a" style="left:956.68px;top:74px;width:1px;height:604px;background:#37393c;"></div>
<div class="a" style="left:983.03px;top:74px;width:1px;height:604px;background:#37393c;"></div>
<div class="a" style="left:1009.39px;top:74px;width:1px;height:604px;background:#37393c;"></div>
<div class="a" style="left:1035.75px;top:74px;width:1px;height:604px;background:#37393c;"></div>
<div class="a" style="left:1062.1px;top:74px;width:1px;height:604px;background:#37393c;"></div>
<div class="a" style="left:1088.45px;top:74px;width:1px;height:604px;background:#37393c;"></div>
<div class="a" style="left:1114.81px;top:74px;width:1px;height:604px;background:#37393c;"></div>
<div class="a" style="left:1141.16px;top:74px;width:1px;height:604px;background:#37393c;"></div>
<div class="a" style="left:1167.52px;top:74px;width:1px;height:604px;background:#37393c;"></div>
<div class="a" style="left:1193.88px;top:74px;width:1px;height:604px;background:#37393c;"></div>
<div class="a" style="left:1220.23px;top:74px;width:1px;height:604px;background:#37393c;"></div>
<div class="a" style="left:1246.59px;top:74px;width:1px;height:604px;background:#37393c;"></div>
<div class="a" style="left:1166px;top:73.8px;width:84px;height:2px;background:#63b95b;"></div>
<div class="a" style="left:1166px;top:344.8px;width:84px;height:3px;background:#1a1a1e;"></div>
<div class="a" style="left:1166px;top:345.2px;width:84px;height:1.8px;background:#63b95b;"></div>
<div class="a" style="left:325px;top:344.8px;width:841px;height:3px;background:#262629;"></div>
<div class="a" style="left:325px;top:72.8px;width:841px;height:1.4px;background:#0f1011;"></div>
<div class="a" style="left:746.5px;top:73.8px;width:419.8px;height:1.6px;background:#4a8f58;"></div>
<div class="a" style="left:748px;top:75.4px;width:418.3px;height:0.6px;background:#2a5a55;"></div>
<div class="a" style="left:748px;top:76px;width:418.3px;height:15px;background:#2c6c6c;"></div>
<div class="a" style="left:748px;top:91px;width:418.3px;height:253.8px;background:#33807e;"></div>
<div class="a" style="left:325px;top:74.5px;width:421px;height:272.5px;background:#f2f2f0;"></div>
<div class="a" style="left:328px;top:76.7px;width:416px;height:14.3px;background:#2c6c6c;"></div>
<div class="a" style="left:328px;top:91px;width:416px;height:253.8px;background:#33807e;"></div>
<div class="a" style="left:325px;top:72.8px;width:841px;height:1.4px;background:#0f1011;"></div>
<div class="a" style="left:327px;top:203.7px;width:50px;height:4.200000000000017px;background:#eeeceb;box-shadow:0 0 0 1px #1f6a68"></div>
<div class="a" style="left:327px;top:213.5px;width:50px;height:4.599999999999994px;background:#eeeceb;box-shadow:0 0 0 1px #1f6a68"></div>
<div class="a" style="left:327px;top:220.7px;width:50px;height:4.300000000000011px;background:#eeeceb;box-shadow:0 0 0 1px #1f6a68"></div>
<div class="a" style="left:327px;top:233.5px;width:50px;height:4.400000000000006px;background:#eeeceb;box-shadow:0 0 0 1px #1f6a68"></div>
<div class="a" style="left:381px;top:190.9px;width:156.79999999999995px;height:4.400000000000006px;background:#eeeceb;box-shadow:0 0 0 1px #1f6a68"></div>
<div class="a" style="left:379px;top:198.4px;width:156.29999999999995px;height:4.299999999999983px;background:#eeeceb;box-shadow:0 0 0 1px #1f6a68"></div>
<div class="a" style="left:377px;top:204px;width:158.29999999999995px;height:12px;background:#eeeceb;box-shadow:0 0 0 1px #1f6a68"></div>
<div class="a" style="left:377px;top:226.2px;width:158.29999999999995px;height:4.5px;background:#eeeceb;box-shadow:0 0 0 1px #1f6a68"></div>
<div class="a" style="left:377px;top:239px;width:158.29999999999995px;height:4.300000000000011px;background:#eeeceb;box-shadow:0 0 0 1px #1f6a68"></div>
<div class="a" style="left:536px;top:196.5px;width:53px;height:4.300000000000011px;background:#eeeceb;box-shadow:0 0 0 1px #1f6a68"></div>
<div class="a" style="left:536px;top:202.1px;width:53px;height:4.099999999999994px;background:#eeeceb;box-shadow:0 0 0 1px #1f6a68"></div>
<div class="a" style="left:536px;top:209.9px;width:53px;height:4.299999999999983px;background:#eeeceb;box-shadow:0 0 0 1px #1f6a68"></div>
<div class="a" style="left:536px;top:215.9px;width:53px;height:4.099999999999994px;background:#eeeceb;box-shadow:0 0 0 1px #1f6a68"></div>
<div class="a" style="left:536px;top:222.6px;width:53px;height:4.400000000000006px;background:#eeeceb;box-shadow:0 0 0 1px #1f6a68"></div>
<div class="a" style="left:536px;top:228.1px;width:53px;height:4.400000000000006px;background:#eeeceb;box-shadow:0 0 0 1px #1f6a68"></div>
<div class="a" style="left:750px;top:203.7px;width:48px;height:4.200000000000017px;background:#eeeceb;box-shadow:0 0 0 1px #1f6a68"></div>
<div class="a" style="left:750px;top:213.5px;width:48px;height:4.599999999999994px;background:#eeeceb;box-shadow:0 0 0 1px #1f6a68"></div>
<div class="a" style="left:750px;top:220.7px;width:48px;height:4.300000000000011px;background:#eeeceb;box-shadow:0 0 0 1px #1f6a68"></div>
<div class="a" style="left:750px;top:233.5px;width:48px;height:4.400000000000006px;background:#eeeceb;box-shadow:0 0 0 1px #1f6a68"></div>
<div class="a" style="left:802px;top:190.9px;width:157.60000000000002px;height:4.400000000000006px;background:#eeeceb;box-shadow:0 0 0 1px #1f6a68"></div>
<div class="a" style="left:800px;top:198.4px;width:156.70000000000005px;height:4.299999999999983px;background:#eeeceb;box-shadow:0 0 0 1px #1f6a68"></div>
<div class="a" style="left:798px;top:204px;width:158.70000000000005px;height:12px;background:#eeeceb;box-shadow:0 0 0 1px #1f6a68"></div>
<div class="a" style="left:798px;top:226.2px;width:158.70000000000005px;height:4.5px;background:#eeeceb;box-shadow:0 0 0 1px #1f6a68"></div>
<div class="a" style="left:798px;top:239px;width:158.70000000000005px;height:4.300000000000011px;background:#eeeceb;box-shadow:0 0 0 1px #1f6a68"></div>
<div class="a" style="left:957.3px;top:196.5px;width:51.80000000000007px;height:4.300000000000011px;background:#eeeceb;box-shadow:0 0 0 1px #1f6a68"></div>
<div class="a" style="left:957.3px;top:202.1px;width:51.80000000000007px;height:4.099999999999994px;background:#eeeceb;box-shadow:0 0 0 1px #1f6a68"></div>
<div class="a" style="left:957.3px;top:209.9px;width:51.80000000000007px;height:4.299999999999983px;background:#eeeceb;box-shadow:0 0 0 1px #1f6a68"></div>
<div class="a" style="left:957.3px;top:215.9px;width:51.80000000000007px;height:4.099999999999994px;background:#eeeceb;box-shadow:0 0 0 1px #1f6a68"></div>
<div class="a" style="left:957.3px;top:222.6px;width:51.80000000000007px;height:4.400000000000006px;background:#eeeceb;box-shadow:0 0 0 1px #1f6a68"></div>
<div class="a" style="left:957.3px;top:228.1px;width:51.80000000000007px;height:4.400000000000006px;background:#eeeceb;box-shadow:0 0 0 1px #1f6a68"></div>
<div class="a" style="left:1011.4px;top:196.6px;width:52.10000000000002px;height:4.300000000000011px;background:#eeeceb;box-shadow:0 0 0 1px #1f6a68"></div>
<div class="a" style="left:1011.4px;top:210.2px;width:52.10000000000002px;height:3.9000000000000057px;background:#eeeceb;box-shadow:0 0 0 1px #1f6a68"></div>
<div class="a" style="left:1011.4px;top:215.9px;width:52.10000000000002px;height:3.9000000000000057px;background:#eeeceb;box-shadow:0 0 0 1px #1f6a68"></div>
<div class="a" style="left:1011.4px;top:222.8px;width:52.10000000000002px;height:4.199999999999989px;background:#eeeceb;box-shadow:0 0 0 1px #1f6a68"></div>
<div class="a" style="left:1010px;top:241.8px;width:53.5px;height:4.199999999999989px;background:#eeeceb;box-shadow:0 0 0 1px #1f6a68"></div>
<div class="a" style="left:1064px;top:202.1px;width:64.5px;height:4.099999999999994px;background:#eeeceb;box-shadow:0 0 0 1px #1f6a68"></div>
<div class="a" style="left:1063px;top:211.9px;width:65.5px;height:4.099999999999994px;background:#eeeceb;box-shadow:0 0 0 1px #1f6a68"></div>
<div class="a" style="left:1063px;top:217.5px;width:65px;height:3.8000000000000114px;background:#eeeceb;box-shadow:0 0 0 1px #1f6a68"></div>
<div class="a" style="left:1064px;top:224.2px;width:65.5px;height:4.400000000000006px;background:#eeeceb;box-shadow:0 0 0 1px #1f6a68"></div>
<div class="a" style="left:1062.5px;top:243.3px;width:65.5px;height:4.299999999999983px;background:#eeeceb;box-shadow:0 0 0 1px #1f6a68"></div>
<div class="a" style="left:1130px;top:176.5px;width:36px;height:4.5px;background:#eeeceb;box-shadow:0 0 0 1px #1f6a68"></div>
<div class="a" style="left:1129px;top:182.1px;width:37px;height:4.099999999999994px;background:#eeeceb;box-shadow:0 0 0 1px #1f6a68"></div>
<div class="a" style="left:1129px;top:191px;width:37px;height:4.400000000000006px;background:#eeeceb;box-shadow:0 0 0 1px #1f6a68"></div>
<div class="a" style="left:1129px;top:198.3px;width:37px;height:3.799999999999983px;background:#eeeceb;box-shadow:0 0 0 1px #1f6a68"></div>
<div class="a" style="left:1128.5px;top:203.5px;width:37.5px;height:4.400000000000006px;background:#eeeceb;box-shadow:0 0 0 1px #1f6a68"></div>
<div class="a" style="left:1128.5px;top:211.6px;width:37.5px;height:4.400000000000006px;background:#eeeceb;box-shadow:0 0 0 1px #1f6a68"></div>
<div class="a" style="left:350.42px;top:76.7px;width:1.2px;height:268px;background:rgba(45,70,72,0.75);"></div>
<div class="a" style="left:376.77px;top:76.7px;width:1.2px;height:268px;background:rgba(45,70,72,0.75);"></div>
<div class="a" style="left:403.12px;top:76.7px;width:1.2px;height:268px;background:rgba(45,70,72,0.75);"></div>
<div class="a" style="left:429.48px;top:76.7px;width:1.2px;height:268px;background:rgba(45,70,72,0.75);"></div>
<div class="a" style="left:455.83px;top:76.7px;width:1.2px;height:268px;background:rgba(45,70,72,0.75);"></div>
<div class="a" style="left:482.19px;top:76.7px;width:1.2px;height:268px;background:rgba(45,70,72,0.75);"></div>
<div class="a" style="left:508.55px;top:76.7px;width:1.2px;height:268px;background:rgba(45,70,72,0.75);"></div>
<div class="a" style="left:534.9px;top:76.7px;width:1.2px;height:268px;background:rgba(45,70,72,0.75);"></div>
<div class="a" style="left:561.25px;top:76.7px;width:1.2px;height:268px;background:rgba(45,70,72,0.75);"></div>
<div class="a" style="left:587.61px;top:76.7px;width:1.2px;height:268px;background:rgba(45,70,72,0.75);"></div>
<div class="a" style="left:613.96px;top:76.7px;width:1.2px;height:268px;background:rgba(45,70,72,0.75);"></div>
<div class="a" style="left:640.32px;top:76.7px;width:1.2px;height:268px;background:rgba(45,70,72,0.75);"></div>
<div class="a" style="left:666.67px;top:76.7px;width:1.2px;height:268px;background:rgba(45,70,72,0.75);"></div>
<div class="a" style="left:693.03px;top:76.7px;width:1.2px;height:268px;background:rgba(45,70,72,0.75);"></div>
<div class="a" style="left:719.38px;top:76.7px;width:1.2px;height:268px;background:rgba(45,70,72,0.75);"></div>
<div class="a" style="left:772.1px;top:76.7px;width:1.2px;height:268px;background:rgba(45,70,72,0.75);"></div>
<div class="a" style="left:798.45px;top:76.7px;width:1.2px;height:268px;background:rgba(45,70,72,0.75);"></div>
<div class="a" style="left:824.8px;top:76.7px;width:1.2px;height:268px;background:rgba(45,70,72,0.75);"></div>
<div class="a" style="left:851.16px;top:76.7px;width:1.2px;height:268px;background:rgba(45,70,72,0.75);"></div>
<div class="a" style="left:877.51px;top:76.7px;width:1.2px;height:268px;background:rgba(45,70,72,0.75);"></div>
<div class="a" style="left:903.87px;top:76.7px;width:1.2px;height:268px;background:rgba(45,70,72,0.75);"></div>
<div class="a" style="left:930.22px;top:76.7px;width:1.2px;height:268px;background:rgba(45,70,72,0.75);"></div>
<div class="a" style="left:956.58px;top:76.7px;width:1.2px;height:268px;background:rgba(45,70,72,0.75);"></div>
<div class="a" style="left:982.93px;top:76.7px;width:1.2px;height:268px;background:rgba(45,70,72,0.75);"></div>
<div class="a" style="left:1009.29px;top:76.7px;width:1.2px;height:268px;background:rgba(45,70,72,0.75);"></div>
<div class="a" style="left:1035.64px;top:76.7px;width:1.2px;height:268px;background:rgba(45,70,72,0.75);"></div>
<div class="a" style="left:1062.0px;top:76.7px;width:1.2px;height:268px;background:rgba(45,70,72,0.75);"></div>
<div class="a" style="left:1088.35px;top:76.7px;width:1.2px;height:268px;background:rgba(45,70,72,0.75);"></div>
<div class="a" style="left:1114.71px;top:76.7px;width:1.2px;height:268px;background:rgba(45,70,72,0.75);"></div>
<div class="a" style="left:1141.06px;top:76.7px;width:1.2px;height:268px;background:rgba(45,70,72,0.75);"></div>
<div class="a" style="left:706px;top:77px;width:38px;height:14px;background:#255d5d;"></div>
<svg class="a" style="left:706px;top:77px;" width="40" height="14" viewBox="0 0 40 14"><path d="M3.5 11 L4.8 4 L10.8 3 L9.6 10" stroke="#dcdcdc" stroke-width="1.3" fill="none"/><ellipse cx="3" cy="11" rx="1.8" ry="1.3" fill="#dcdcdc"/><ellipse cx="9" cy="10.2" rx="1.8" ry="1.3" fill="#dcdcdc"/></svg>
<div class="t" style="left:720.5px;top:80.5px;font-size:8.8px;color:#d8d8d8;">B4</div>
<svg class="a" style="left:327.8px;top:94.3px;" width="14" height="10" viewBox="0 0 14 10"><rect x="0" y="0" width="13.5" height="9.3" rx="1" fill="#0c0c0c"/><g fill="#eef6f6"><rect x="0.9" y="1" width="2.2" height="7.3" rx="0.8"/><rect x="4.5" y="1" width="2.2" height="7.3" rx="0.8"/><rect x="8.1" y="1" width="2.2" height="7.3" rx="0.8"/><rect x="11.2" y="1" width="1.8" height="7.3" rx="0.8"/></g></svg>
<svg class="a" style="left:325px;top:203px;" width="8" height="15" viewBox="0 0 8 15"><path d="M5.8 1.3 L2.3 1.3 L2.3 12.7 L5.8 12.7" stroke="#555" stroke-width="2.4" fill="none"/><path d="M5.4 1.3 L2.3 1.3 L2.3 12.7 L5.4 12.7" stroke="#f4f4f4" stroke-width="1.3" fill="none"/></svg>
<svg class="a" style="left:327px;top:331px;" width="12" height="12" viewBox="0 0 12 12"><path d="M1 4 L3.5 4 L7 1.2 L7 10.8 L3.5 8 L1 8 Z" fill="#c8d8d8"/><path d="M8.7 4.5 Q10 6 8.7 7.5" stroke="#c8d8d8" stroke-width="0.9" fill="none"/></svg>
<div class="a" style="left:325px;top:39px;width:1.2px;height:639px;background:#c9a640;"></div>
<div class="a" style="left:325px;top:74.5px;width:2px;height:272.5px;background:#f4e9cc;"></div>
<svg class="a" style="left:325px;top:39px;" width="10" height="12" viewBox="0 0 10 12"><path d="M0 1 L8.5 1 L0 10.5 Z" fill="#f2c14e"/></svg>
<div class="a" style="left:589.4px;top:131.2px;width:223px;height:600px;background:#efefef;border-radius:5.5px;box-shadow:inset 0 0 0 1px #fbfbfb,0 0 0 1px rgba(10,30,30,0.55),0 3px 10px rgba(0,0,0,0.25)"></div>
<div class="t" style="left:603px;top:141.1px;font-size:12.0px;color:#1d1d1d;-webkit-text-stroke:0.25px #1d1d1d">Piano Roll - MIDI editing</div>
<div class="t" style="left:603px;top:160.93px;font-size:12.0px;color:#1d1d1d;-webkit-text-stroke:0.25px #1d1d1d">MIDI Events List</div>
<div class="a" style="left:602.4px;top:180.13px;width:198.1px;height:1.5px;background:#8f8f8f;"></div>
<div class="t" style="left:603px;top:190.71px;font-size:12.0px;color:#1d1d1d;-webkit-text-stroke:0.25px #1d1d1d">Add new MIDI part</div>
<div class="t" style="left:603px;top:210.54px;font-size:12.0px;color:#1d1d1d;-webkit-text-stroke:0.25px #1d1d1d">Export Step Sequencer pattern</div>
<div class="t" style="left:603px;top:230.37px;font-size:12.0px;color:#1d1d1d;-webkit-text-stroke:0.25px #1d1d1d">Properties</div>
<div class="t" style="left:603px;top:250.2px;font-size:12.0px;color:#1d1d1d;-webkit-text-stroke:0.25px #1d1d1d">Mixer</div>
<div class="a" style="left:602.4px;top:269.4px;width:198.1px;height:1.5px;background:#8f8f8f;"></div>
<div class="t" style="left:603px;top:279.98px;font-size:12.0px;color:#1d1d1d;-webkit-text-stroke:0.25px #1d1d1d">Output to</div>
<svg class="a" style="left:791px;top:279.28px;" width="10" height="12" viewBox="0 0 10 12"><path d="M2.9 2.2 L6.7 6 L2.9 9.8" stroke="#111111" stroke-width="1.85" fill="none"/></svg>
<div class="t" style="left:603px;top:299.81px;font-size:12.0px;color:#1d1d1d;-webkit-text-stroke:0.25px #1d1d1d">Color</div>
<svg class="a" style="left:791px;top:299.10999999999996px;" width="10" height="12" viewBox="0 0 10 12"><path d="M2.9 2.2 L6.7 6 L2.9 9.8" stroke="#111111" stroke-width="1.85" fill="none"/></svg>
<div class="a" style="left:602.4px;top:319.01px;width:198.1px;height:1.5px;background:#8f8f8f;"></div>
<div class="t" style="left:603px;top:329.59px;font-size:12.0px;color:#1d1d1d;-webkit-text-stroke:0.25px #1d1d1d">Remove track</div>
<div class="t" style="left:603px;top:349.42px;font-size:12.0px;color:#1d1d1d;-webkit-text-stroke:0.25px #1d1d1d">Process</div>
<svg class="a" style="left:791px;top:348.71999999999997px;" width="10" height="12" viewBox="0 0 10 12"><path d="M2.9 2.2 L6.7 6 L2.9 9.8" stroke="#111111" stroke-width="1.85" fill="none"/></svg>
<div class="t" style="left:603px;top:369.25px;font-size:12.0px;color:#1d1d1d;-webkit-text-stroke:0.25px #1d1d1d">Takes</div>
<svg class="a" style="left:791px;top:368.54999999999995px;" width="10" height="12" viewBox="0 0 10 12"><path d="M2.9 2.2 L6.7 6 L2.9 9.8" stroke="#111111" stroke-width="1.85" fill="none"/></svg>
<div class="t" style="left:603px;top:389.08px;font-size:12.0px;color:#1d1d1d;-webkit-text-stroke:0.25px #1d1d1d">Part Color</div>
<svg class="a" style="left:791px;top:388.38px;" width="10" height="12" viewBox="0 0 10 12"><path d="M2.9 2.2 L6.7 6 L2.9 9.8" stroke="#111111" stroke-width="1.85" fill="none"/></svg>
<div class="t" style="left:603px;top:408.91px;font-size:12.0px;color:#1d1d1d;-webkit-text-stroke:0.25px #1d1d1d">Remove part</div>
<div class="t" style="left:603px;top:428.74px;font-size:12.0px;color:#1d1d1d;-webkit-text-stroke:0.25px #1d1d1d">Lock part offset&nbsp;&nbsp;&nbsp;size</div>
<div class="a" style="left:594.2px;top:443.87px;width:213.5px;height:19.2px;background:#0a33c9;border-radius:4.5px"></div>
<div class="t" style="left:603px;top:448.57px;font-size:12.0px;color:#ffffff;-webkit-text-stroke:0.25px #ffffff">Create Ghost Part</div>
<div class="t" style="left:603px;top:468.4px;font-size:12.0px;color:#1d1d1d;-webkit-text-stroke:0.25px #1d1d1d">Un-Ghost Part</div>
<div class="t" style="left:603px;top:488.23px;font-size:12.0px;color:#1d1d1d;-webkit-text-stroke:0.25px #1d1d1d">Mute Part&nbsp;&nbsp;&nbsp;&nbsp;&nbsp;&nbsp;&nbsp;Q</div>
<div class="t" style="left:603px;top:508.06px;font-size:12.0px;color:#1d1d1d;-webkit-text-stroke:0.25px #1d1d1d">Quantize</div>
<div class="a" style="left:602.4px;top:527.2599999999999px;width:198.1px;height:1.5px;background:#8f8f8f;"></div>
<div class="t" style="left:603px;top:537.84px;font-size:12.0px;color:#1d1d1d;-webkit-text-stroke:0.25px #1d1d1d">Zoom</div>
<div class="a" style="left:602.4px;top:557.0399999999998px;width:198.1px;height:1.5px;background:#8f8f8f;"></div>
<div class="t" style="left:603px;top:567.62px;font-size:12.0px;color:#1d1d1d;-webkit-text-stroke:0.25px #1d1d1d">Effects</div>
<svg class="a" style="left:791px;top:566.92px;" width="10" height="12" viewBox="0 0 10 12"><path d="M2.9 2.2 L6.7 6 L2.9 9.8" stroke="#111111" stroke-width="1.85" fill="none"/></svg>
<div class="a" style="left:602.4px;top:586.8199999999999px;width:198.1px;height:1.5px;background:#8f8f8f;"></div>
<div class="t" style="left:603px;top:597.4px;font-size:12.0px;color:#1d1d1d;-webkit-text-stroke:0.25px #1d1d1d">Clone track</div>
<div class="t" style="left:603px;top:617.23px;font-size:12.0px;color:#8a8a8a;-webkit-text-stroke:0.25px #8a8a8a">Move track up</div>
<div class="t" style="left:603px;top:637.06px;font-size:12.0px;color:#8a8a8a;-webkit-text-stroke:0.25px #8a8a8a">Move track down</div>
<div class="a" style="left:602.4px;top:656.26px;width:198.1px;height:1.5px;background:#8f8f8f;"></div>
<div class="t" style="left:603px;top:666.84px;font-size:12.0px;color:#1d1d1d;-webkit-text-stroke:0.25px #1d1d1d">Add a track</div>
<svg class="a" style="left:791px;top:666.1399999999999px;" width="10" height="12" viewBox="0 0 10 12"><path d="M2.9 2.2 L6.7 6 L2.9 9.8" stroke="#111111" stroke-width="1.85" fill="none"/></svg>
<div class="a" style="left:602.4px;top:686.0399999999998px;width:198.1px;height:1.5px;background:#8f8f8f;"></div>
<svg class="a" style="left:718px;top:451.5px;" width="18" height="22" viewBox="0 0 18 22"><path d="M4 2 L4 15.3 L7.3 12.4 L9.7 17.6 L11.9 16.7 L9.6 11.6 L13.9 11.4 Z" fill="#111" stroke="#f4f4f4" stroke-width="1" stroke-linejoin="round"/></svg>
</body></html>
